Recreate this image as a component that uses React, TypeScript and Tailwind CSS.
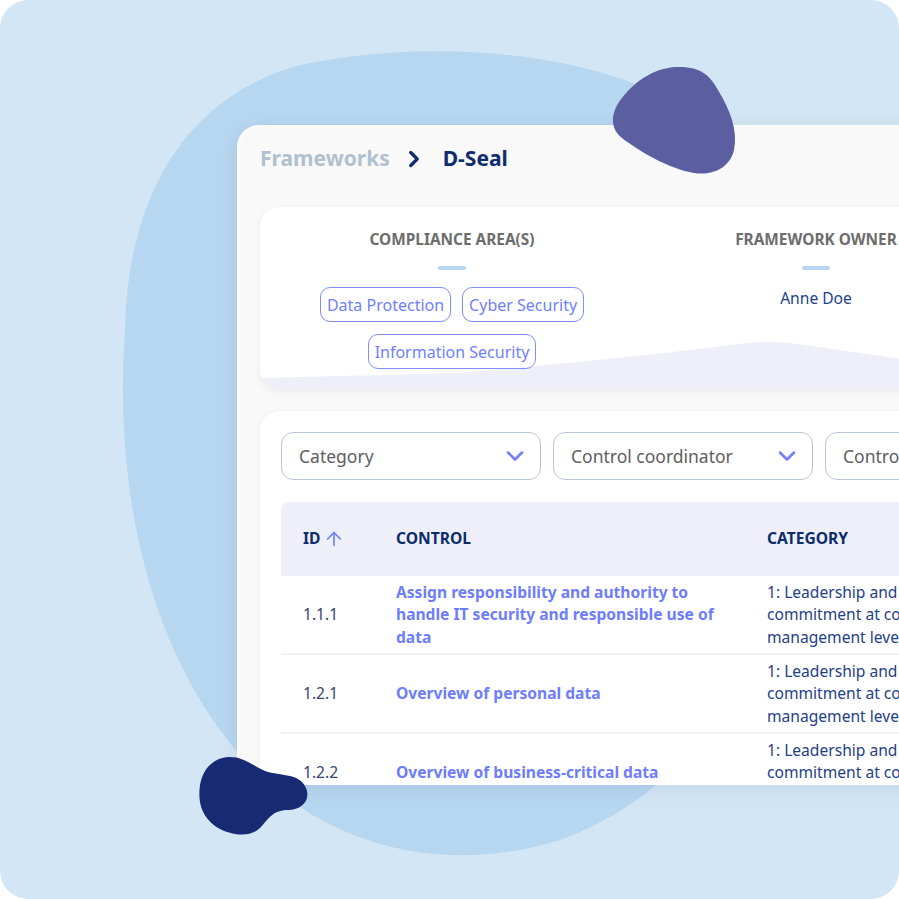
import React from 'react'
import { ChevronDown, ChevronRight, ArrowUp } from 'lucide-react'

const areas = ['Data Protection', 'Cyber Security', 'Information Security']

const rows = [
  {
    id: '1.1.1',
    control: 'Assign responsibility and authority to handle IT security and responsible use of data',
    category: '1: Leadership and commitment at corporate management level',
  },
  {
    id: '1.2.1',
    control: 'Overview of personal data',
    category: '1: Leadership and commitment at corporate management level',
  },
  {
    id: '1.2.2',
    control: 'Overview of business-critical data',
    category: '1: Leadership and commitment at corporate management level',
  },
]

function Select({ label }: { label: string }) {
  return (
    <div className="flex h-[48px] w-[260px] shrink-0 items-center justify-between rounded-[12px] border-[1.5px] border-[#b9c6d7] pl-[17px] pr-[11px]">
      <span className="whitespace-nowrap text-[17.5px] text-[#5e5e5e]">{label}</span>
      <ChevronDown size={28} strokeWidth={2.2} className="text-[#6f7fff]" />
    </div>
  )
}

export default function App() {
  return (
    <div className="relative h-[899px] w-[899px] overflow-hidden rounded-[28px] bg-[#d3e6f5] pl-[237px] pt-[125px] font-['Noto_Sans',sans-serif]">
      {/* background blob */}
      <svg className="absolute inset-0" width="899" height="899" viewBox="0 0 899 899">
        <path
          d="M300 65 C420 40 560 50 650 90 C760 140 800 330 790 500 C780 650 700 790 560 840 C430 880 300 840 220 730 C140 620 115 470 125 330 C128 190 190 95 300 65 Z"
          fill="#b7d6ef"
        />
      </svg>

      <div className="relative h-[660px] w-[720px] overflow-hidden rounded-tl-[22px] border-l-2 border-t-2 border-white bg-[#f9f9f9] pl-[21px] pt-[18px] shadow-[0_4px_20px_rgba(0,40,90,0.08)]">
        {/* breadcrumb */}
        <div className="flex h-[28px] items-center text-[21px] font-bold">
          <span className="text-[#b1c0ce]">Frameworks</span>
          <ChevronRight size={26} strokeWidth={3} className="ml-[11px] mr-[16px] text-[#0f2d6e]" />
          <span className="text-[#0f2d6e]">D-Seal</span>
        </div>

        {/* summary */}
        <div className="relative mt-[34px] h-[183px] w-[720px] overflow-hidden rounded-[20px] bg-white shadow-[0_2px_10px_rgba(0,0,0,0.06)]">
          <svg className="absolute bottom-0 left-0" width="720" height="60" viewBox="0 123 720 60">
            <path d="M0 171 L200 166 Q380 150 470 138 Q508 132 545 138 L720 163 L720 183 L0 183 Z" fill="#efeffa" />
          </svg>
          <div className="relative grid grid-cols-[364px_364px] pl-[10px] pt-[23px]">
            <div className="flex flex-col items-center">
              <div className="whitespace-nowrap text-[15.4px] font-bold leading-[20px] text-[#6d6d6d]">COMPLIANCE AREA(S)</div>
              <div className="mt-[16px] h-[4px] w-[28px] rounded-full bg-[#b7d6ef]" />
              <div className="mt-[17px] flex w-[300px] flex-wrap justify-center gap-x-[11px] gap-y-[12px]">
                {areas.map((a) => (
                  <span
                    key={a}
                    className="flex h-[35px] items-center rounded-[10px] border-[1.5px] border-[#7f8dff] px-[6px] text-[16px] text-[#6f7fff]"
                  >
                    {a}
                  </span>
                ))}
              </div>
            </div>
            <div className="flex flex-col items-center">
              <div className="whitespace-nowrap text-[15.4px] font-bold leading-[20px] text-[#6d6d6d]">FRAMEWORK OWNER</div>
              <div className="mt-[16px] h-[4px] w-[28px] rounded-full bg-[#b7d6ef]" />
              <div className="mt-[17px] text-[15.6px] leading-[22px] text-[#1d3f8f]">Anne Doe</div>
            </div>
          </div>
        </div>

        {/* controls */}
        <div className="mt-[21px] w-[720px] rounded-[20px] bg-white pl-[21px] pt-[21px] shadow-[0_2px_10px_rgba(0,0,0,0.06)]">
          <div className="flex gap-[12px]">
            <Select label="Category" />
            <Select label="Control coordinator" />
            <Select label="Control owner" />
          </div>

          <div className="mt-[22px]">
            <div className="flex h-[74px] items-center rounded-t-[8px] bg-[#efeffa] text-[15.6px] font-bold text-[#0c2d6b]">
              <div className="flex w-[115px] items-center gap-[3px] pl-[22px]">
                ID
                <ArrowUp size={22} strokeWidth={1.8} className="text-[#6f7fff]" />
              </div>
              <div className="w-[371px]">CONTROL</div>
              <div>CATEGORY</div>
            </div>
            {rows.map((r) => (
              <div key={r.id} className="flex h-[79px] items-center border-b-2 border-[#f1f1f1]">
                <div className="w-[115px] pl-[22px] text-[15.6px] text-[#34456f]">{r.id}</div>
                <div className="w-[371px] pr-[41px] text-[15.6px] font-bold leading-[22.5px] text-[#6e7dfd]">{r.control}</div>
                <div className="w-[200px] text-[15.6px] leading-[22.5px] text-[#1e4088]">{r.category}</div>
              </div>
            ))}
          </div>
        </div>
      </div>

      {/* decorative blobs */}
      <svg className="absolute inset-0 pointer-events-none" width="899" height="899" viewBox="0 0 899 899">
        <path
          d="M676 67 C700 66 710 75 718 90 C730 110 738 130 734 150 C730 168 712 176 694 173 C670 169 640 152 622 138 C608 127 612 110 622 98 C636 80 655 68 676 67 Z"
          fill="#5b5fa2"
        />
        <path
          d="M228 757 C245 756 255 768 268 772 C285 776 300 774 306 788 C311 800 302 810 288 810 C272 810 268 820 260 828 C250 838 230 836 215 826 C200 815 198 800 200 785 C203 768 214 758 228 757 Z"
          fill="#182a73"
        />
      </svg>
    </div>
  )
}
